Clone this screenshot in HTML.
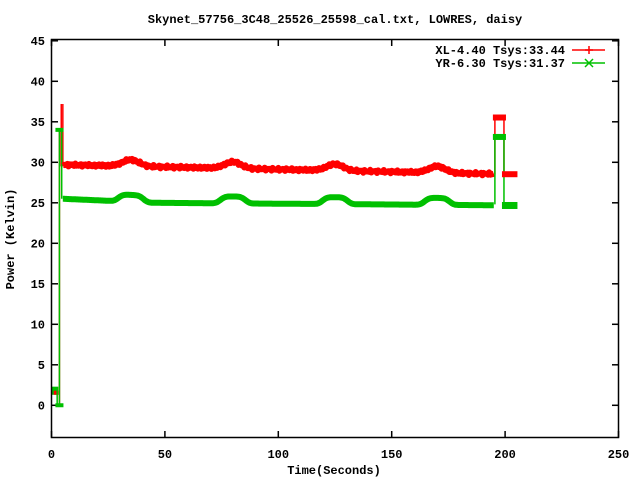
<!DOCTYPE html>
<html><head><meta charset="utf-8"><style>
html,body{margin:0;padding:0;background:#fff;width:640px;height:480px;overflow:hidden}
svg{display:block}
text{font-family:"Liberation Mono","DejaVu Sans Mono",monospace;font-weight:bold;font-size:12px;fill:#000}
</style></head><body>
<svg id="s" width="640" height="480" xmlns="http://www.w3.org/2000/svg">
<rect x="0" y="0" width="640" height="480" fill="#fff"/>
<text x="335" y="23" text-anchor="middle" font-size="11">Skynet_57756_3C48_25526_25598_cal.txt, LOWRES, daisy</text>
<g id="ax"></g>
<g id="data"></g>
<rect x="51.5" y="39.5" width="567" height="398" fill="none" stroke="#000" stroke-width="1.5"/>
<text x="565" y="54" text-anchor="end">XL-4.40 Tsys:33.44</text>
<text x="565" y="67" text-anchor="end">YR-6.30 Tsys:31.37</text>
<line x1="572" y1="50" x2="605" y2="50" stroke="#f00" stroke-width="1.5"/>
<path d="M589 46V54M585 50H593" stroke="#f00" stroke-width="1.5"/>
<line x1="572" y1="63" x2="605" y2="63" stroke="#00c000" stroke-width="1.5"/>
<path d="M585 59L593 67M593 59L585 67" stroke="#00c000" stroke-width="1.5"/>
<text x="334" y="474" text-anchor="middle">Time(Seconds)</text>
<text transform="translate(14,239) rotate(-90)" text-anchor="middle">Power (Kelvin)</text>
</svg>
<script>
var NS="http://www.w3.org/2000/svg",G="#00c000";
function px(x){return 51.5+2.268*x}
function py(y){return 405.3-8.1*y}
function el(t,a,p){var e=document.createElementNS(NS,t);for(var k in a)e.setAttribute(k,a[k]);if(p)p.appendChild(e);return e}
var ax=document.getElementById('ax');
for(var i=0;i<=250;i+=50){var x=px(i);
 el('line',{x1:x,y1:437.5,x2:x,y2:431,stroke:'#000','stroke-width':1.5},ax);
 el('line',{x1:x,y1:39.5,x2:x,y2:46,stroke:'#000','stroke-width':1.5},ax);
 var t=el('text',{x:x,y:458,'text-anchor':'middle'},ax);t.textContent=i;}
for(var v=0;v<=45;v+=5){var y=py(v);
 el('line',{x1:51.5,y1:y,x2:58,y2:y,stroke:'#000','stroke-width':1.5},ax);
 el('line',{x1:618.5,y1:y,x2:612,y2:y,stroke:'#000','stroke-width':1.5},ax);
 var t=el('text',{x:45,y:y+4,'text-anchor':'end'},ax);t.textContent=v;}
var d=document.getElementById('data');
function bump(x,c,w){var s=0;[35,80,125,170].forEach(function(m){var u=(x-m)/w;s+=c*Math.exp(-u*u)});return s}
function red(x){return 29.7-1.2*(x-5)/200+bump(x,0.8,5)+(Math.sin(x*7.3)*0.12)+(Math.sin(x*3.1)*0.08)}
function grn(x){var b=x<45?25.5-0.5*(x-5)/40:25.0-0.3*(x-45)/150;var s=0;[35,80,125,170].forEach(function(m){var u=(x-m)/6;s+=0.85*Math.exp(-Math.pow(u*u,2))});return b+s}
function band(f,x0,x1,col,w){var p='';for(var x=x0;x<=x1;x+=0.5){p+=(p?'L':'M')+px(x).toFixed(1)+' '+py(f(x)).toFixed(1)}
 el('path',{d:p,stroke:col,'stroke-width':w,fill:'none','stroke-linejoin':'round'},d)}
el('rect',{x:px(0),y:py(2.3),width:px(3)-px(0),height:py(1.3)-py(2.3),fill:G},d);
el('rect',{x:px(1),y:py(1.8),width:px(3)-px(1),height:py(1.3)-py(1.8),fill:'#f00'},d);
el('path',{d:'M'+px(3.5)+' '+py(-0.2)+'L'+px(3.5)+' '+py(34)+'M'+px(4.3)+' '+py(37.2)+'L'+px(4.3)+' '+py(29.5)+'M'+px(5)+' '+py(37.2)+'L'+px(5)+' '+py(29.5),stroke:'#f00','stroke-width':1.5,fill:'none'},d);
el('path',{d:'M'+px(3.5)+' '+py(0)+'L'+px(3.5)+' '+py(34)+'M'+px(4.5)+' '+py(34)+'L'+px(4.5)+' '+py(25.5)+'M'+px(2.5)+' '+py(2)+'L'+px(2.5)+' '+py(0),stroke:G,'stroke-width':1.5,fill:'none'},d);
el('path',{d:'M'+(px(3.5)-4)+' '+py(34)+'l8 0M'+(px(3.5)-4)+' '+py(0)+'l8 0',stroke:G,'stroke-width':4},d);
band(red,5,195,'#f00',6);
band(grn,5,195,G,6);
el('path',{d:'M'+px(195.5)+' '+py(28.5)+'V'+py(35.7)+'M'+px(199.5)+' '+py(35.5)+'V'+py(28.5),stroke:'#f00','stroke-width':1.5},d);
el('path',{d:'M'+px(195.5)+' '+py(24.8)+'V'+py(33.2)+'M'+px(199.5)+' '+py(33.2)+'V'+py(24.7),stroke:G,'stroke-width':1.5},d);
el('rect',{x:px(195.5)-2,y:py(35.9),width:px(199.5)-px(195.5)+4,height:6,fill:'#f00'},d);
el('rect',{x:px(195.5)-2,y:py(33.5),width:px(199.5)-px(195.5)+4,height:6,fill:G},d);
el('rect',{x:px(199.5)-2,y:py(28.9),width:px(205)-px(199.5)+3,height:6,fill:'#f00'},d);
el('rect',{x:px(199.5)-2,y:py(25.1),width:px(205)-px(199.5)+3,height:7,fill:G},d);
</script>
</body></html>
